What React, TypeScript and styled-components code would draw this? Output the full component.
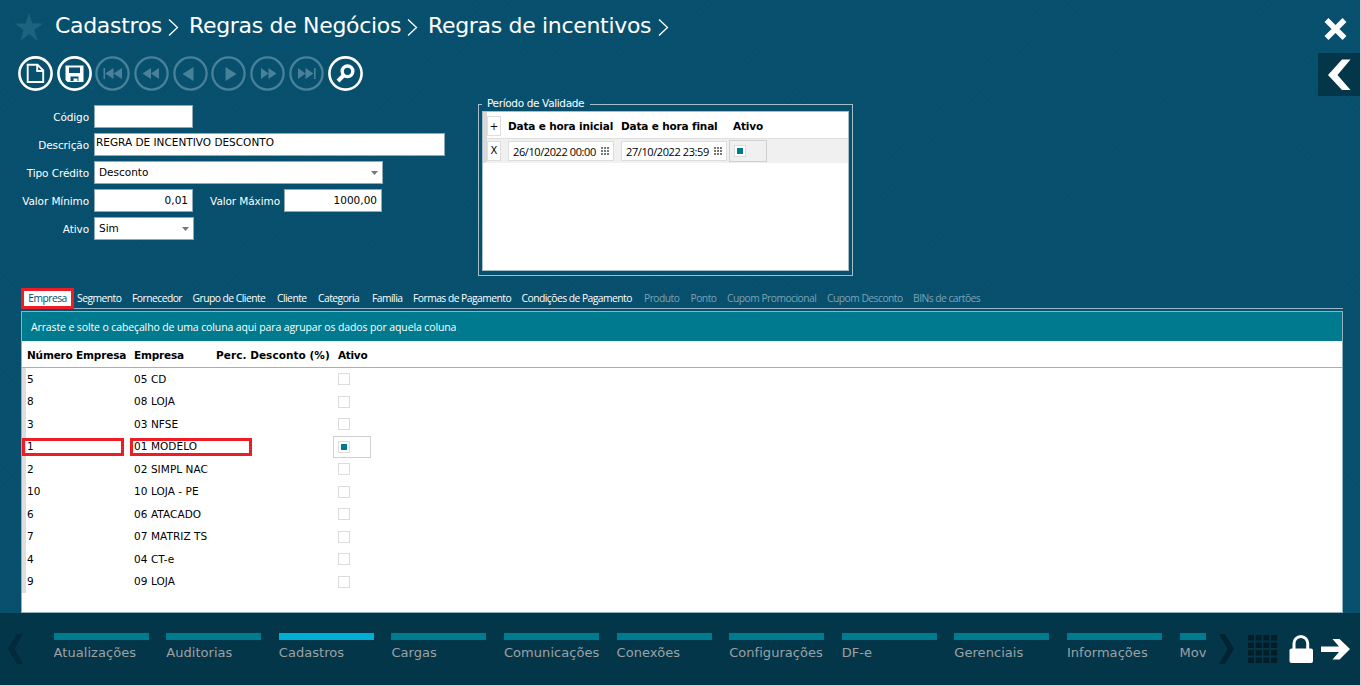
import React from 'react';
import styled, { createGlobalStyle } from 'styled-components';

const VERDANA = "Verdana, 'DejaVu Sans', sans-serif";
const SEGOE = "'Open Sans', 'Noto Sans', sans-serif";

const GlobalStyle = createGlobalStyle`
  * { box-sizing: border-box; }
  body { margin: 0; background: #c9d3d8; overflow: hidden; }
`;

const Window = styled.div`
  width: 1360px;
  height: 685px;
  display: flex;
  flex-direction: column;
  overflow: hidden;
  color: #fff;
  font-family: ${VERDANA};
  font-size: 10.5px;
  white-space: nowrap;
  background-color: #07516f;
  background-image:
    repeating-linear-gradient(45deg, rgba(0, 0, 0, 0.02) 0 1px, transparent 1px 4px),
    repeating-linear-gradient(-45deg, rgba(0, 0, 0, 0.02) 0 1px, transparent 1px 4px);
`;

const Header = styled.header`
  height: 50px;
  display: flex;
  align-items: center;
  padding: 0 12px 0 15px;
  flex: none;
`;
const StarIcon = styled.svg`
  width: 28px;
  height: 28px;
  margin: 4px 12px 0 0;
`;
const Crumb = styled.span<{ $w: number }>`
  width: ${p => p.$w}px;
  font-size: 22px;
  line-height: 30px;
  letter-spacing: -0.32px;
  margin-top: 1px;
`;
const CrumbArrow = styled.svg`
  width: 11px;
  height: 17px;
  margin: 5px 10px 0 0;
`;
const CloseIcon = styled.svg`
  width: 24px;
  height: 24px;
  margin: 7px 0 0 auto;
`;

const Toolbar = styled.div`
  height: 47px;
  display: flex;
  flex: none;
  padding: 6px 0 0 18px;
  gap: 3.7px;
`;
const Tool = styled.svg<{ $off?: boolean }>`
  width: 35px;
  height: 35px;
  flex: none;
  color: ${p => (p.$off ? '#498199' : '#fff')};
`;
const Collapse = styled.button`
  width: 42px;
  height: 43px;
  margin: -3px 0 0 auto;
  border: 0;
  padding: 0;
  background: #04364a;
  display: flex;
  svg { margin: 6px 0 0 10px; }
`;

const Upper = styled.section`
  height: 191px;
  flex: none;
  display: flex;
`;
const Form = styled.div`
  width: 478px;
  padding-top: 8px;
  display: flex;
  flex-direction: column;
  gap: 5px;
`;
const Line = styled.div`
  display: flex;
  height: 23px;
`;
const Label = styled.label<{ $w: number; $mr?: number }>`
  width: ${p => p.$w}px;
  text-align: right;
  padding: 5px 0 0;
  margin-right: ${p => p.$mr ?? 5}px;
  line-height: 15px;
  letter-spacing: -0.1px;
`;
const Field = styled.div<{ $w: number; $right?: boolean; $top?: number; $left?: number }>`
  width: ${p => p.$w}px;
  height: 23px;
  background: #fff;
  border: 1px solid #8fa9b6;
  color: #000;
  display: flex;
  justify-content: ${p => (p.$right ? 'flex-end' : 'space-between')};
  padding: ${p => p.$top ?? 3}px 4px 0 ${p => p.$left ?? 4}px;
  line-height: 15px;
`;
const Caret = styled.i`
  width: 7px;
  height: 4px;
  margin-top: 6px;
  background: #777;
  clip-path: polygon(0 0, 100% 0, 50% 100%);
`;

const Period = styled.fieldset`
  width: 375px;
  height: 179px;
  margin: 0;
  padding: 0 3px 4px;
  border: 1px solid #a4bdc8;
  display: flex;
  flex-direction: column;
  min-width: 0;
`;
const Legend = styled.legend`
  height: 14px;
  line-height: 13px;
  margin-left: 0;
  padding: 0 6px 0 5px;
  letter-spacing: -0.35px;
`;
const PeriodGrid = styled.div`
  height: 161px;
  border: 1px solid #a4bdc8;
  background: #fff;
  color: #000;
`;
const PeriodRow = styled.div<{ $active?: boolean }>`
  height: ${p => (p.$active ? 24 : 27)}px;
  display: flex;
  align-items: center;
  border-left: 4px solid #d9d9d9;
  background: ${p => (p.$active ? '#f0f0f0' : '#fff')};
  border-bottom: 1px solid ${p => (p.$active ? '#f0f0f0' : '#ddd')};
  padding-top: ${p => (p.$active ? 0 : 2)}px;
`;
const MiniButton = styled.button`
  width: 14px;
  height: 20px;
  margin-right: 7px;
  border: 1px solid #ddd;
  background: #fff;
  color: #000;
  font: 10px ${VERDANA};
  padding: 0;
`;
const PeriodHead = styled.b<{ $w: number }>`
  width: ${p => p.$w}px;
  letter-spacing: -0.16px;
`;
const DateBox = styled.div<{ $gap: number }>`
  width: 106px;
  height: 20px;
  margin-right: ${p => p.$gap}px;
  border: 1px solid #ddd;
  background: #fff;
  display: flex;
  align-items: center;
  justify-content: space-between;
  padding: 1px 3px 0 4px;
  font: 11px ${SEGOE};
  letter-spacing: -0.4px;
`;
const Cell = styled.div`
  width: 38px;
  height: 22px;
  border: 1px solid #d0d0d0;
  background: #f0f0f0;
  display: flex;
  align-items: center;
  padding-left: 4px;
`;
const Check = styled.i<{ $on?: boolean }>`
  width: 12px;
  height: 12px;
  border: 1px solid #dcdcdc;
  background: ${p => (p.$on ? '#007a8f' : '#fff')};
  box-shadow: inset 0 0 0 2px #fff;
`;

const Tabs = styled.nav`
  height: 21px;
  flex: none;
  width: 1321px;
  margin-left: 22px;
  display: flex;
  font: 10.3px ${SEGOE};
  border-bottom: 1px solid #9cb9c5;
`;
const Tab = styled.span<{ $w: number; $off?: boolean }>`
  width: ${p => p.$w}px;
  line-height: 21px;
  letter-spacing: -0.52px;
  color: ${p => (p.$off ? '#7ba2b3' : '#fff')};
`;
const ActiveTab = styled.span`
  width: 53px;
  height: 21px;
  margin: 0 3px 0 -1px;
  background: #fff;
  border: 3px solid #ee1c25;
  color: #06506e;
  text-align: center;
  line-height: 15px;
  letter-spacing: -0.5px;
`;

const Grid = styled.section`
  margin: 2px 0 0 21px;
  width: 1322px;
  height: 302px;
  flex: none;
  border: 1px solid #8fb0bd;
  background: #fff;
  color: #000;
`;
const GroupBar = styled.div`
  height: 29px;
  background: #007a8f;
  color: #fff;
  padding-left: 9px;
  font: 10.5px ${SEGOE};
  line-height: 30px;
  letter-spacing: -0.12px;
`;
const GridHead = styled.div`
  height: 27px;
  display: flex;
  align-items: center;
  padding-left: 5px;
  border-bottom: 1px solid #adadad;
  padding-top: 2px;
  font-weight: bold;
`;
const GridRow = styled.div`
  height: 22.5px;
  display: flex;
  align-items: center;
  border-left: 4px solid #dedede;
  padding-left: 1px;
`;
const Col = styled.span<{ $w: number; $ls?: number }>`
  width: ${p => p.$w}px;
  position: relative;
  letter-spacing: ${p => p.$ls ?? 0}px;
  line-height: 15px;
`;
const Mark = styled.i<{ $left: number; $w: number }>`
  position: absolute;
  left: ${p => p.$left}px;
  top: -1px;
  width: ${p => p.$w}px;
  height: 18px;
  border: 3px solid #ee1c25;
`;
const CheckSlot = styled.div<{ $focus?: boolean }>`
  width: 38px;
  height: 22px;
  margin-left: -5px;
  padding-left: 4px;
  border: 1px solid ${p => (p.$focus ? '#d0d0d0' : 'transparent')};
  display: flex;
  align-items: center;
`;

const Footer = styled.footer`
  flex: 1;
  background: #04364a;
  display: flex;
  padding-left: 8px;
`;
const NavArrow = styled.svg`
  width: 15px;
  height: 30px;
  margin: 21px 0 0;
`;
const Modules = styled.div`
  width: 1152.4px;
  margin: 20px 13px 0 30.6px;
  overflow: hidden;
  display: flex;
  gap: 17.6px;
`;
const Module = styled.div<{ $on?: boolean }>`
  width: 95px;
  flex: none;
  border-top: 7px solid ${p => (p.$on ? '#00add3' : '#007a8f')};
  height: 50px;
  padding-top: 4px;
  font-size: 13px;
  line-height: 17px;
  color: #9da1a3;
  letter-spacing: 0.05px;
`;
const FootIcon = styled.svg<{ $ml: number }>`
  height: 30px;
  margin: 21px 0 0 ${p => p.$ml}px;
  flex: none;
`;

const Dots = () => (
  <svg width="9" height="9" fill="#777">
    {[0, 1, 2].map(r => [0, 1, 2].map(c => <rect key={`${r}${c}`} x={c * 3} y={r * 3} width="2" height="2" />))}
  </svg>
);

const ToolIcon = ({ off, children }: { off?: boolean; children: React.ReactNode }) => (
  <Tool $off={off} viewBox="0 0 35 35">
    <circle cx="17.500" cy="17.500" r="16.100" fill="none" stroke="currentColor" strokeWidth={off ? 2.3 : 2.6} />
    {children}
  </Tool>
);

const tabs: [string, number, boolean?][] = [
  ['Segmento', 55], ['Fornecedor', 60.5], ['Grupo de Cliente', 84.5], ['Cliente', 41],
  ['Categoria', 54], ['Família', 41], ['Formas de Pagamento', 108.5], ['Condições de Pagamento', 122.5],
  ['Produto', 46.5, true], ['Ponto', 36.5, true], ['Cupom Promocional', 100, true],
  ['Cupom Desconto', 86, true], ['BINs de cartões', 80, true],
];
const rows: [string, string][] = [
  ['5', '05 CD'], ['8', '08 LOJA'], ['3', '03 NFSE'], ['1', '01 MODELO'], ['2', '02 SIMPL NAC'],
  ['10', '10 LOJA - PE'], ['6', '06 ATACADO'], ['7', '07 MATRIZ TS'], ['4', '04 CT-e'], ['9', '09 LOJA'],
];
const modules = [
  'Atualizações', 'Auditorias', 'Cadastros', 'Cargas', 'Comunicações', 'Conexões',
  'Configurações', 'DF-e', 'Gerenciais', 'Informações', 'Mov',
];

const Chevron = () => (
  <CrumbArrow viewBox="0 0 11 17"><path d="M1 0.500 L9.500 8.500 L1 16.500" fill="none" stroke="#fff" strokeWidth="1.300" /></CrumbArrow>
);

export default function App() {
  return (
    <Window>
      <GlobalStyle />
      <Header>
        <StarIcon viewBox="0 0 28 28"><path fill="#1b6480" d="M14 0l3.400 10.500H28l-8.600 6.600L22.700 28 14 21.300 5.300 28l3.300-10.900L0 10.500h10.600z" /></StarIcon>
        <Crumb $w={113}>Cadastros</Crumb><Chevron />
        <Crumb $w={218}>Regras de Negócios</Crumb><Chevron />
        <Crumb $w={230}>Regras de incentivos</Crumb><Chevron />
        <CloseIcon viewBox="0 0 24 24"><path d="M2.500 3 L20.500 21 M20.500 3 L2.500 21" stroke="#fff" strokeWidth="5.500" /></CloseIcon>
      </Header>
      <Toolbar>
        <ToolIcon>
          <path d="M9.700 8.700 H19.500 L25.200 14.500 V26 H9.700 Z M19.200 8.700 V15 H25" fill="none" stroke="currentColor" strokeWidth="1.900" />
        </ToolIcon>
        <ToolIcon>
          <path fillRule="evenodd" fill="currentColor" d="M8.500 9.500 H26.500 V26 H10.500 L8.500 24 Z M12 11.500 V17 H23 V11.500 Z M13.500 20.500 V25 H21.500 V20.500 Z" />
          <path fill="currentColor" d="M16.500 22.500h4v3h-4z" />
        </ToolIcon>
        <ToolIcon off><path fill="currentColor" d="M8.500 12h1.600v11H8.500zM18.500 12v11l-8.300-5.500zM27 12v11l-8.500-5.500z" /></ToolIcon>
        <ToolIcon off><path fill="currentColor" d="M17 12v11l-8.500-5.500zM25 12v11l-8-5.500z" /></ToolIcon>
        <ToolIcon off><path fill="currentColor" d="M20.500 11v14l-11-7z" /></ToolIcon>
        <ToolIcon off><path fill="currentColor" d="M14.500 11v14l11-7z" /></ToolIcon>
        <ToolIcon off><path fill="currentColor" d="M11 12v11l7.500-5.500zM18.500 12v11l8-5.500z" /></ToolIcon>
        <ToolIcon off><path fill="currentColor" d="M9 12v11l7.500-5.500zM16.500 12v11l8-5.500zM25 12h1.600v11H25z" /></ToolIcon>
        <ToolIcon>
          <circle cx="19.500" cy="15.300" r="5.300" fill="none" stroke="currentColor" strokeWidth="3.400" />
          <path d="M16 19 L10 25" stroke="currentColor" strokeWidth="4" />
        </ToolIcon>
        <Collapse><svg width="23" height="32"><path fill="#fff" d="M22.500 0.500 L9.500 16 L22.500 31 H14 L0 16 L14 0.500 Z" /></svg></Collapse>
      </Toolbar>
      <Upper>
        <Form>
          <Line><Label $w={89}>Código</Label><Field $w={99} /></Line>
          <Line><Label $w={89}>Descrição</Label><Field $w={351} $top={1} $left={1}>REGRA DE INCENTIVO DESCONTO</Field></Line>
          <Line><Label $w={89}>Tipo Crédito</Label><Field $w={289}>Desconto<Caret /></Field></Line>
          <Line>
            <Label $w={89}>Valor Mínimo</Label><Field $w={99} $right>0,01</Field>
            <Label $w={87} $mr={4}>Valor Máximo</Label><Field $w={98} $right>1000,00</Field>
          </Line>
          <Line><Label $w={89}>Ativo</Label><Field $w={100}>Sim<Caret /></Field></Line>
        </Form>
        <Period>
          <Legend>Período de Validade</Legend>
          <PeriodGrid>
            <PeriodRow>
              <MiniButton>+</MiniButton>
              <PeriodHead $w={113}>Data e hora inicial</PeriodHead>
              <PeriodHead $w={112}>Data e hora final</PeriodHead>
              <PeriodHead $w={40}>Ativo</PeriodHead>
            </PeriodRow>
            <PeriodRow $active>
              <MiniButton>X</MiniButton>
              <DateBox $gap={7}>26/10/2022 00:00<Dots /></DateBox>
              <DateBox $gap={2}>27/10/2022 23:59<Dots /></DateBox>
              <Cell><Check $on /></Cell>
            </PeriodRow>
          </PeriodGrid>
        </Period>
      </Upper>
      <Tabs>
        <ActiveTab>Empresa</ActiveTab>
        {tabs.map(([t, w, off]) => <Tab key={t} $w={w} $off={off}>{t}</Tab>)}
      </Tabs>
      <Grid>
        <GroupBar>Arraste e solte o cabeçalho de uma coluna aqui para agrupar os dados por aquela coluna</GroupBar>
        <GridHead>
          <Col $w={107} $ls={-0.18}>Número Empresa</Col>
          <Col $w={82} $ls={-0.2}>Empresa</Col>
          <Col $w={122} $ls={0.05}>Perc. Desconto (%)</Col>
          <Col $w={40} $ls={-0.3}>Ativo</Col>
        </GridHead>
        {rows.map(([n, name]) => {
          const sel = n === '1';
          return (
            <GridRow key={n}>
              <Col $w={107}>{n}{sel && <Mark $left={-5} $w={102} />}</Col>
              <Col $w={204} $ls={0.06}>{name}{sel && <Mark $left={-4} $w={122} />}</Col>
              <CheckSlot $focus={sel}><Check $on={sel} /></CheckSlot>
            </GridRow>
          );
        })}
      </Grid>
      <Footer>
        <NavArrow viewBox="0 0 15 30"><path fill="#032a3b" d="M15 0 L6.500 15 L15 30 H9 L0 15 L9 0 Z" /></NavArrow>
        <Modules>
          {modules.map(m => <Module key={m} $on={m === 'Cadastros'}>{m}</Module>)}
        </Modules>
        <NavArrow viewBox="0 0 15 30"><path fill="#022331" d="M0 0 L8.500 15 L0 30 H6 L15 15 L6 0 Z" /></NavArrow>
        <FootIcon $ml={14} width="30" viewBox="0 0 30 30" fill="#021c28">
          {[0, 1, 2, 3].map(r => [0, 1, 2, 3].map(c => <rect key={`${r}${c}`} x={c * 7.7} y={r * 7.5 + 1} width="6" height="5.500" />))}
        </FootIcon>
        <FootIcon $ml={11} width="24" viewBox="0 0 24 30">
          <rect x="0.500" y="14.500" width="23.500" height="14.500" rx="2" fill="#fff" />
          <path d="M5 16 V9.500 A6.800 7 0 0 1 18.700 9.500 V16" fill="none" stroke="#fff" strokeWidth="3" />
        </FootIcon>
        <FootIcon $ml={8} width="30" viewBox="0 0 30 30">
          <path fill="#fff" d="M0 12.500 H18 L11.500 5 H18.500 L29 15 L18.500 25.500 H11.500 L18 18 H0 Z" />
        </FootIcon>
      </Footer>
    </Window>
  );
}
